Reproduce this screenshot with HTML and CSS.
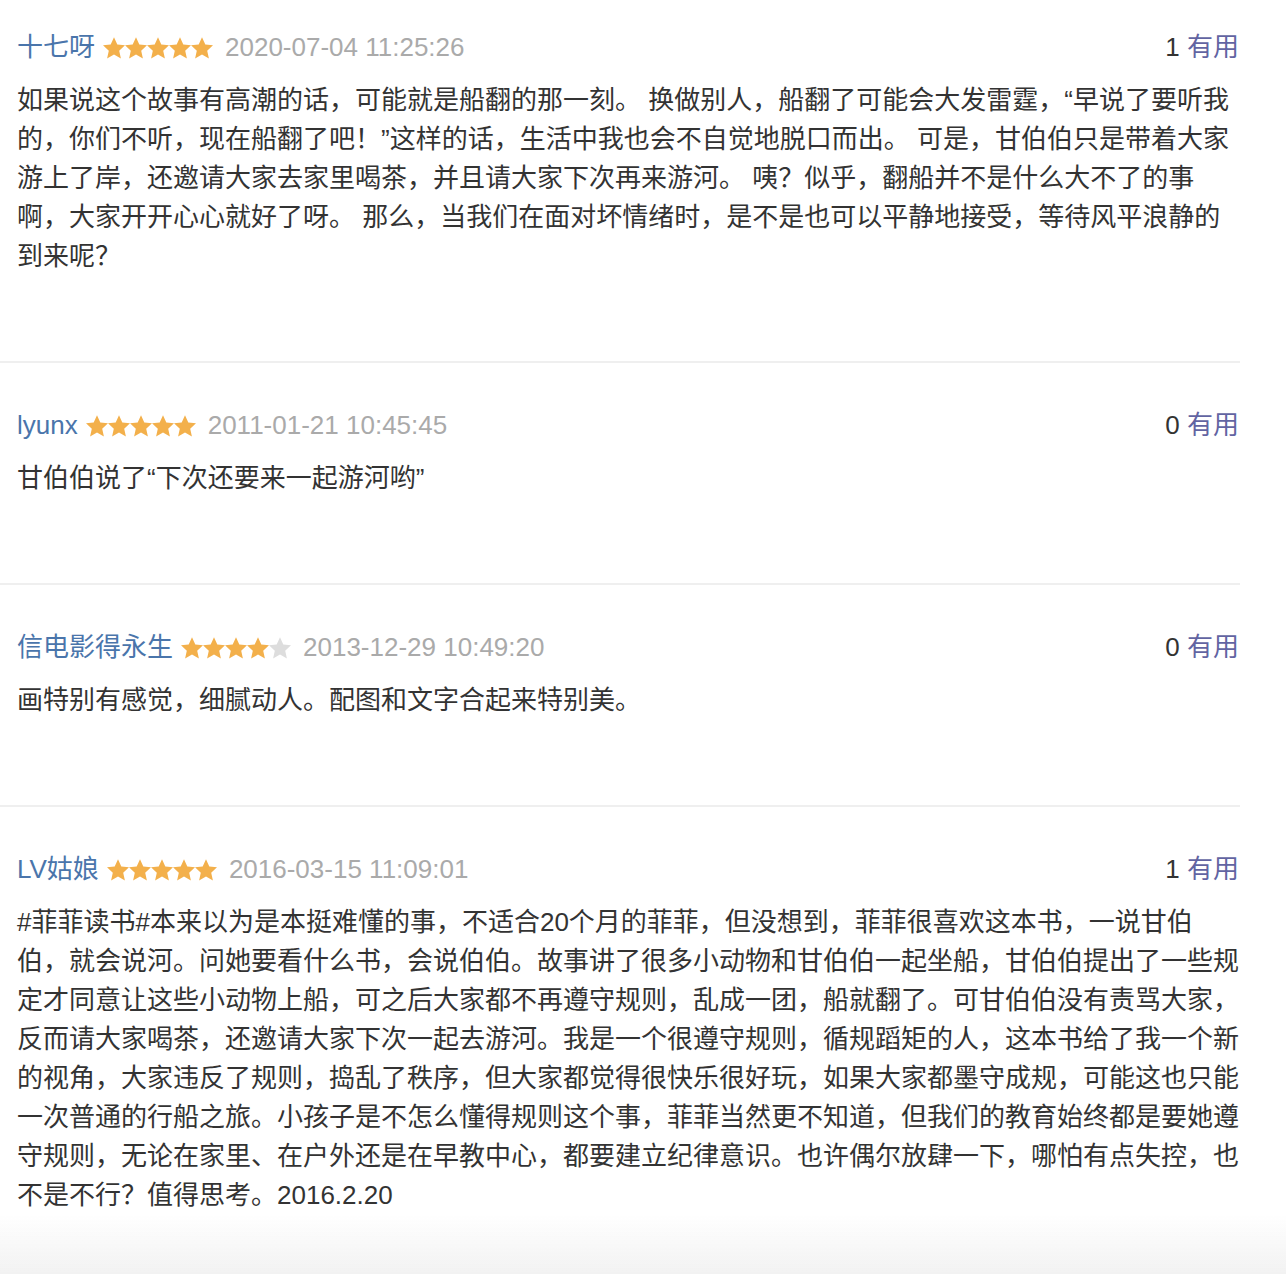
FILE: index.html
```html
<!DOCTYPE html>
<html lang="zh-CN">
<head>
<meta charset="utf-8">
<title>短评</title>
<link rel="stylesheet" href="styles.css">
</head>
<body>
<svg class="defs" width="0" height="0" aria-hidden="true">
  <defs>
    <symbol id="star" viewBox="0 0 22 22">
      <polygon points="11,0.2 14.3,7.5 22,8.2 16.2,13.7 17.9,21.6 11,17.5 4.1,21.6 5.8,13.7 0,8.2 7.7,7.5"/>
    </symbol>
  </defs>
</svg>

<ul class="reviews">
  <li class="review">
    <div class="review-head">
      <div class="meta">
        <span class="author">十七呀</span>
        <span class="stars">
          <svg class="star on"><use href="#star"/></svg><svg class="star on"><use href="#star"/></svg><svg class="star on"><use href="#star"/></svg><svg class="star on"><use href="#star"/></svg><svg class="star on"><use href="#star"/></svg>
        </span>
        <span class="date">2020-07-04 11:25:26</span>
      </div>
      <div class="vote"><span class="count">1</span> <span class="useful">有用</span></div>
    </div>
    <p class="review-text">如果说这个故事有高潮的话，可能就是船翻的那一刻。 换做别人，船翻了可能会大发雷霆，“早说了要听我<br>的，你们不听，现在船翻了吧！”这样的话，生活中我也会不自觉地脱口而出。 可是，甘伯伯只是带着大家<br>游上了岸，还邀请大家去家里喝茶，并且请大家下次再来游河。 咦？似乎，翻船并不是什么大不了的事<br>啊，大家开开心心就好了呀。 那么，当我们在面对坏情绪时，是不是也可以平静地接受，等待风平浪静的<br>到来呢？</p>
  </li>

  <li class="review">
    <div class="review-head">
      <div class="meta">
        <span class="author">lyunx</span>
        <span class="stars">
          <svg class="star on"><use href="#star"/></svg><svg class="star on"><use href="#star"/></svg><svg class="star on"><use href="#star"/></svg><svg class="star on"><use href="#star"/></svg><svg class="star on"><use href="#star"/></svg>
        </span>
        <span class="date">2011-01-21 10:45:45</span>
      </div>
      <div class="vote"><span class="count">0</span> <span class="useful">有用</span></div>
    </div>
    <p class="review-text">甘伯伯说了“下次还要来一起游河哟”</p>
  </li>

  <li class="review">
    <div class="review-head">
      <div class="meta">
        <span class="author">信电影得永生</span>
        <span class="stars">
          <svg class="star on"><use href="#star"/></svg><svg class="star on"><use href="#star"/></svg><svg class="star on"><use href="#star"/></svg><svg class="star on"><use href="#star"/></svg><svg class="star off"><use href="#star"/></svg>
        </span>
        <span class="date">2013-12-29 10:49:20</span>
      </div>
      <div class="vote"><span class="count">0</span> <span class="useful">有用</span></div>
    </div>
    <p class="review-text">画特别有感觉，细腻动人。配图和文字合起来特别美。</p>
  </li>

  <li class="review">
    <div class="review-head">
      <div class="meta">
        <span class="author">LV姑娘</span>
        <span class="stars">
          <svg class="star on"><use href="#star"/></svg><svg class="star on"><use href="#star"/></svg><svg class="star on"><use href="#star"/></svg><svg class="star on"><use href="#star"/></svg><svg class="star on"><use href="#star"/></svg>
        </span>
        <span class="date">2016-03-15 11:09:01</span>
      </div>
      <div class="vote"><span class="count">1</span> <span class="useful">有用</span></div>
    </div>
    <p class="review-text">#菲菲读书#本来以为是本挺难懂的事，不适合20个月的菲菲，但没想到，菲菲很喜欢这本书，一说甘伯<br>伯，就会说河。问她要看什么书，会说伯伯。故事讲了很多小动物和甘伯伯一起坐船，甘伯伯提出了一些规<br>定才同意让这些小动物上船，可之后大家都不再遵守规则，乱成一团，船就翻了。可甘伯伯没有责骂大家，<br>反而请大家喝茶，还邀请大家下次一起去游河。我是一个很遵守规则，循规蹈矩的人，这本书给了我一个新<br>的视角，大家违反了规则，捣乱了秩序，但大家都觉得很快乐很好玩，如果大家都墨守成规，可能这也只能<br>一次普通的行船之旅。小孩子是不怎么懂得规则这个事，菲菲当然更不知道，但我们的教育始终都是要她遵<br>守规则，无论在家里、在户外还是在早教中心，都要建立纪律意识。也许偶尔放肆一下，哪怕有点失控，也<br>不是不行？值得思考。2016.2.20</p>
  </li>
</ul>

<div class="bottom-fade" aria-hidden="true"></div>
</body>
</html>
```

FILE: styles.css
```css
html, body {
  margin: 0;
  padding: 0;
  background: #ffffff;
}

body {
  font-family: "Liberation Sans", "Noto Sans CJK SC", sans-serif;
  font-size: 26px;
  line-height: 39px;
  color: #333333;
}

.defs {
  position: absolute;
  width: 0;
  height: 0;
  overflow: hidden;
}

.reviews {
  list-style: none;
  margin: 0;
  padding: 0;
  width: 1240px;
}

.review {
  padding: 43px 0 85px 16px;
  border-bottom: 2px solid #efefef;
}

.review:first-child {
  padding-top: 28px;
}

.review-head {
  display: flex;
  align-items: center;
  justify-content: space-between;
  height: 39px;
}

.meta {
  display: flex;
  align-items: center;
}

.author {
  color: #4a75ab;
  font-size: 26px;
  margin-left: 1px;
}

.stars {
  display: flex;
  margin: 0 12px 0 8px;
}

.star {
  width: 22px;
  height: 22px;
  display: block;
}

.star.on {
  fill: #f3b04b;
}

.star.off {
  fill: #dddddd;
}

.date {
  color: #aaaaaa;
  font-size: 26px;
}

.vote {
  white-space: nowrap;
  margin-right: 1px;
}

.count {
  color: #333333;
}

.useful {
  color: #6264a2;
}

.review-text {
  margin: 14px 0 0;
  padding-left: 1px;
}

.bottom-fade {
  position: fixed;
  left: 0;
  right: 0;
  bottom: 0;
  height: 60px;
  background: linear-gradient(to bottom, rgba(242, 242, 242, 0), #f2f2f2);
  pointer-events: none;
}
```
